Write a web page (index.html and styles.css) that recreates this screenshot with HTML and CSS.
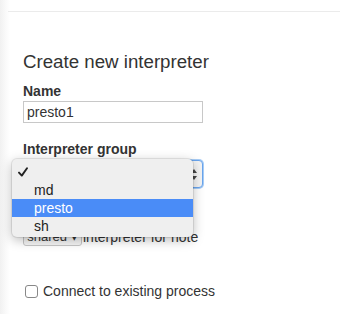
FILE: index.html
```html
<!DOCTYPE html>
<html lang="en">
<head>
    <meta charset="UTF-8">
    <title>Create new interpreter</title>
    <link rel="stylesheet" href="styles.css">
</head>
<body>
    <div class="topbar"></div>
    <div class="container">
        <h3>Create new interpreter</h3>

        <label for="name">Name</label>
        <div class="text-input" id="name">presto1</div>

        <label for="group" class="group-label">Interpreter group</label>
        <div class="select-wrap">
            <div class="select-box" id="group">
                <span class="arrows">
                    <svg width="6" height="11" viewBox="0 0 6 11"><path d="M0 4 L3 0 L6 4 Z M0 7 L3 11 L6 7 Z" fill="#444"/></svg>
                </span>
            </div>
            <ul class="dropdown">
                <li class="checked">
                    <svg width="10" height="10" viewBox="0 0 10 10"><path d="M1 5.6 L3.8 8.6 L9 1.2" fill="none" stroke="#222" stroke-width="1.9" stroke-linecap="round" stroke-linejoin="round"/></svg>
                </li>
                <li>md</li>
                <li class="active">presto</li>
                <li>sh</li>
            </ul>
        </div>

        <div class="option-row">
            <span class="mini-select">shared &#9662;</span>
            <span>interpreter for note</span>
        </div>

        <div class="checkbox-container">
            <span class="checkbox"></span>
            <span>Connect to existing process</span>
        </div>
    </div>
</body>
</html>
```

FILE: styles.css
```css
body {
    margin: 0;
    padding: 0;
    font-family: "Liberation Sans", Arial, sans-serif;
    font-size: 14px;
    color: #333;
    background: linear-gradient(to right, #f1f1f1 0, #fafafa 6px, #fff 10px);
    height: 314px;
    overflow: hidden;
}
.topbar {
    height: 11px;
    margin-left: 8px;
    border-bottom: 1px solid #ebebeb;
}
.container {
    padding-left: 23px;
}
h3 {
    font-size: 18.7px;
    font-weight: normal;
    line-height: 20px;
    margin: 40px 0 11px;
}
label {
    display: block;
    font-weight: bold;
    line-height: 16px;
    margin-bottom: 2px;
}
.text-input {
    width: 172px;
    height: 20px;
    line-height: 20px;
    padding: 0 3px;
    border: 1px solid #c8c8c8;
    background: #fff;
}
.group-label {
    margin-top: 18px;
    margin-bottom: 3px;
}
.select-wrap {
    position: relative;
    width: 180px;
}
.select-box {
    height: 26px;
    border: 1px solid #6aa5ee;
    border-radius: 4px;
    box-shadow: 0 0 0 1px #a8cdf6;
    background: #f4f4f4;
    display: flex;
    justify-content: flex-end;
    align-items: center;
}
.arrows {
    display: flex;
    margin-right: 5px;
}
.dropdown {
    position: absolute;
    left: -11px;
    top: -1px;
    width: 181px;
    margin: 0;
    padding: 2px 0;
    list-style: none;
    background: #efefef;
    border-radius: 5px;
    box-shadow: 0 3px 12px rgba(0, 0, 0, 0.28), 0 0 0 1px rgba(0, 0, 0, 0.08);
    z-index: 2;
}
.dropdown li {
    height: 18px;
    line-height: 18px;
    padding-left: 22px;
    color: #222;
}
.dropdown li.checked {
    display: flex;
    align-items: center;
    padding-left: 6px;
    padding-top: 2px;
}
.dropdown li.active {
    background: #4a8cf7;
    color: #fff;
}
.option-row {
    display: flex;
    align-items: center;
    margin-top: 40px;
    gap: 1px;
}
.mini-select {
    display: inline-block;
    width: 57px;
    height: 16px;
    line-height: 16px;
    border: 1px solid #c6c6c6;
    border-radius: 3px;
    background: #f6f6f6;
    font-size: 13px;
    text-align: center;
}
.checkbox-container {
    display: flex;
    align-items: center;
    gap: 5px;
    margin-top: 37px;
    padding-left: 2px;
}
.checkbox {
    width: 11px;
    height: 11px;
    border: 1px solid #888;
    border-radius: 3px;
    background: #fff;
}
```
